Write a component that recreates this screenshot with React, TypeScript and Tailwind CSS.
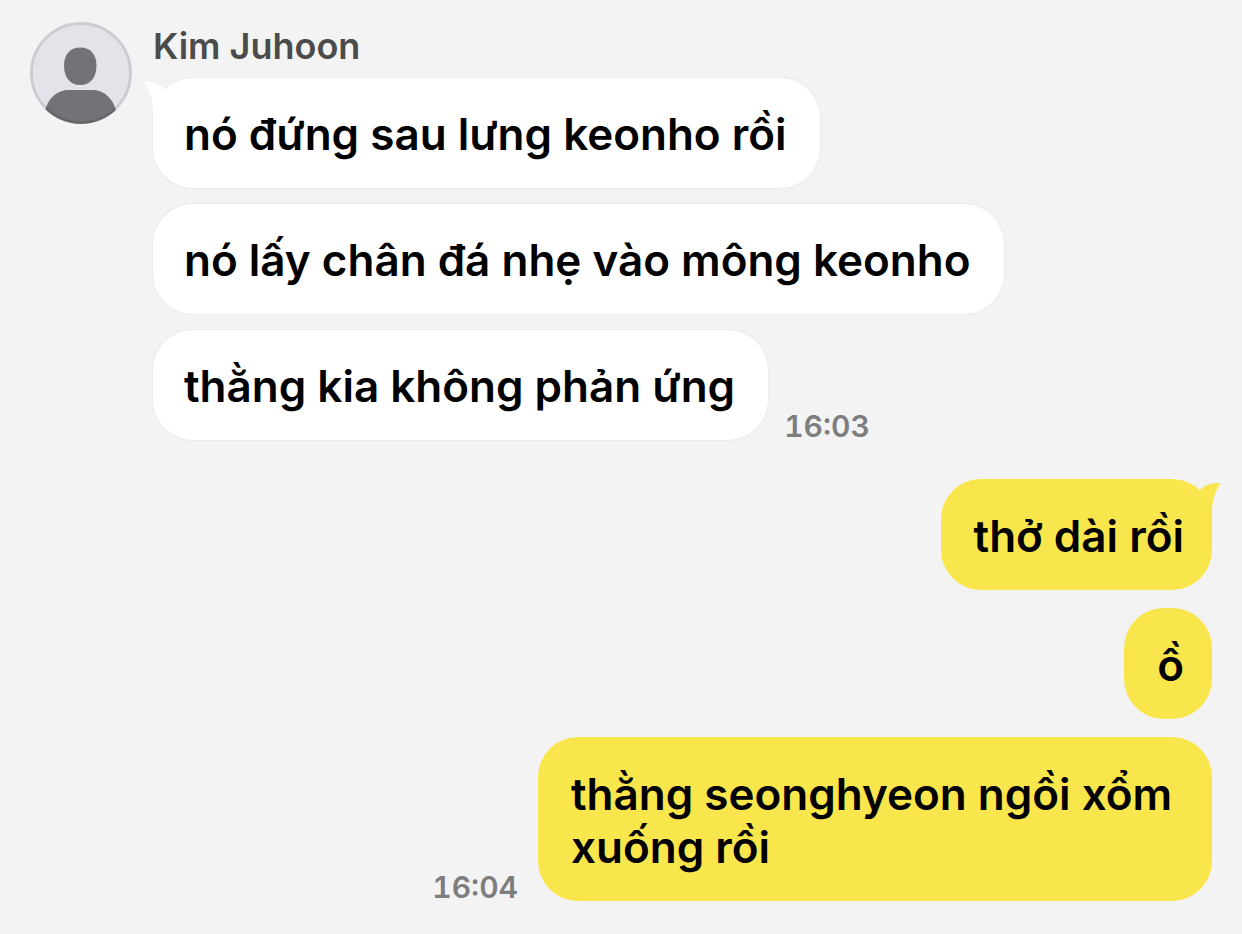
import { clsx } from 'clsx';
import type { ReactNode } from 'react';

const received = [
  { text: 'nó đứng sau lưng keonho rồi' },
  { text: 'nó lấy chân đá nhẹ vào mông keonho' },
  { text: 'thằng kia không phản ứng', time: '16:03' },
];

const sent = [
  { text: 'thở dài rồi' },
  { text: 'ồ' },
  { text: 'thằng seonghyeon ngồi xổm xuống rồi', time: '16:04' },
];

function Avatar() {
  return (
    <svg viewBox="0 0 102 102" className="size-[102px] shrink-0" role="img" aria-label="Kim Juhoon">
      <defs>
        <clipPath id="avatar-clip">
          <circle cx="51" cy="51" r="51" />
        </clipPath>
      </defs>
      <g clipPath="url(#avatar-clip)">
        <rect width="102" height="102" fill="#e2e4e9" />
        <path
          d="M50.3 25.5C60.5 25.5 66.5 32.5 66.5 43.5C66.5 55.5 60.5 63 50.3 63C40 63 34 55.5 34 43.5C34 32.5 40 25.5 50.3 25.5Z"
          fill="#727377"
        />
        <path d="M15 102V89C18 76 27 68 39 68H62C74 68 83 76 86 89V102Z" fill="#727377" />
      </g>
      <circle cx="51" cy="51" r="49.5" fill="none" stroke="#000" strokeOpacity="0.1" strokeWidth="3" />
    </svg>
  );
}

// Small horn at the top corner of the first bubble in a group
function Tail({ mine }: { mine?: boolean }) {
  return (
    <svg
      viewBox="0 0 30 36"
      className={clsx(
        'absolute top-[3px] h-9 w-[30px]',
        mine ? '-right-[9px] -scale-x-100 text-[#f9e54c]' : '-left-[9px] text-white',
      )}
      aria-hidden="true"
    >
      <path d="M0.5 1C9 0.5 16 2.5 21 8L30 20L20 36H9V31C9 18 6 10 0.5 1Z" fill="currentColor" />
    </svg>
  );
}

function Bubble({ mine, tail, children }: { mine?: boolean; tail?: boolean; children: ReactNode }) {
  return (
    <div
      className={clsx(
        'relative rounded-[40px] pb-[27px] text-[44px] leading-[53px] font-semibold text-black',
        mine
          ? 'max-w-[674px] bg-[#f9e54c] pt-[31px] pr-7 pl-[33px]'
          : 'bg-white pt-[30px] pr-[33px] pl-[31px] shadow-[0_0_0_1px_#ebebeb]',
      )}
    >
      {tail && <Tail mine={mine} />}
      <p className="relative">{children}</p>
    </div>
  );
}

function Time({ children }: { children: ReactNode }) {
  return (
    <time className="shrink-0 text-[30px] leading-7 font-semibold text-[#7d7d7d] tabular-nums">
      {children}
    </time>
  );
}

export default function App() {
  return (
    <main className="min-h-screen bg-[#f3f3f3] px-[30px] pt-[22px] pb-8 font-['Inter','Liberation_Sans',sans-serif]">
      <section className="flex items-start gap-[21px]">
        <Avatar />
        <div className="min-w-0 flex-1">
          <h2 className="text-[36px] leading-[48px] font-semibold text-[#4b4b4b]">Kim Juhoon</h2>
          <ul className="mt-2 flex flex-col gap-4">
            {received.map((msg, i) => (
              <li key={msg.text} className="flex items-end gap-4">
                <Bubble tail={i === 0}>{msg.text}</Bubble>
                {msg.time && <Time>{msg.time}</Time>}
              </li>
            ))}
          </ul>
        </div>
      </section>

      <ul className="mt-[39px] flex flex-col gap-[18px]">
        {sent.map((msg, i) => (
          <li key={msg.text} className="flex items-end justify-end gap-5">
            {msg.time && <Time>{msg.time}</Time>}
            <Bubble mine tail={i === 0}>
              {msg.text}
            </Bubble>
          </li>
        ))}
      </ul>
    </main>
  );
}
